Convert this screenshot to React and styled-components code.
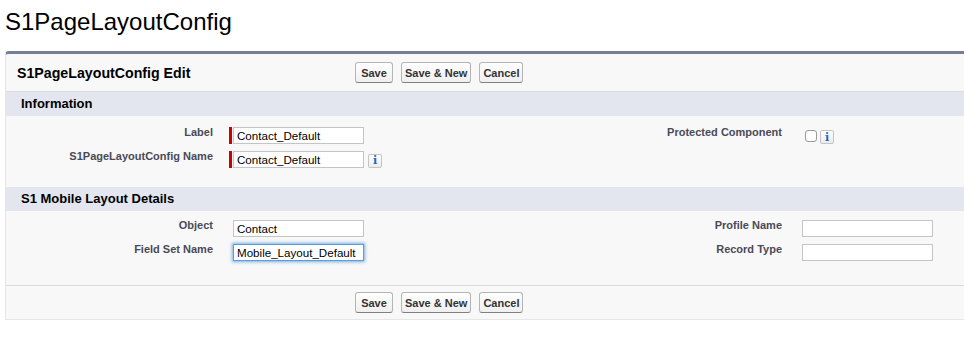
import React from "react";
import styled, { createGlobalStyle } from "styled-components";

const Global = createGlobalStyle`
  html, body { margin: 0; padding: 0; background: #fff; overflow: hidden; }
  body { font-family: Arial, "Liberation Sans", Helvetica, sans-serif; color: #000; }
`;

const Page = styled.div`
  padding-left: 5px;
  width: 1000px;
`;

const PageTitle = styled.h1`
  margin: 8px 0 15px 0;
  font-size: 24px;
  line-height: 28px;
  font-weight: normal;
  color: #000;
`;

const Panel = styled.div`
  width: 990px;
  background: #f8f8f8;
  border-top: 3px solid #747e96;
  border-left: 1px solid #e6e6e6;
  border-bottom: 1px solid #e6e6e6;
  border-top-left-radius: 4px;
`;

const Bar = styled.div`
  display: flex;
  align-items: center;
  height: ${(p) => p.$h}px;
  ${(p) => (p.$top ? "border-bottom: 1px solid #dbdbdb;" : "border-top: 1px solid #dbdbdb;")}
`;

const BarTitle = styled.h2`
  margin: 0;
  width: 349px;
  box-sizing: border-box;
  padding-left: 11px;
  font-size: 14.2px;
  font-weight: bold;
  color: #000;
`;

const Buttons = styled.div`
  display: flex;
  gap: 8px;
`;

const Button = styled.button`
  height: 21px;
  min-width: ${(p) => p.$min || 0}px;
  padding: 0 3px;
  font-family: Arial, "Liberation Sans", Helvetica, sans-serif;
  font-size: 11px;
  font-weight: bold;
  color: #333;
  background: linear-gradient(#ffffff, #efefef);
  border: 1px solid #b5b5b5;
  border-bottom-color: #7f7f7f;
  border-radius: 3px;
  cursor: pointer;
`;

const SectionHeader = styled.h3`
  margin: 0;
  height: 24px;
  line-height: 24px;
  padding-left: 15px;
  background: #e3e6ee;
  font-size: 13px;
  font-weight: bold;
  color: #000;
`;

const SectionBody = styled.div`
  display: grid;
  grid-template-columns: 217px 349px 220px 1fr;
  padding: ${(p) => p.$pt}px 0 ${(p) => p.$pb}px 0;
`;

const LabelCell = styled.div`
  padding: 2px 10px 0 0;
  height: 24px;
  box-sizing: border-box;
  text-align: right;
  font-size: 11px;
  line-height: 13px;
  font-weight: bold;
  color: #4a4a56;
`;

const DataCell = styled.div`
  display: flex;
  align-items: ${(p) => (p.$start ? "flex-start" : "center")};
  height: 24px;
  box-sizing: border-box;
  padding: ${(p) => (p.$start ? "6px" : "3px")} 0 4px 6px;
`;

const RequiredBar = styled.span`
  display: inline-block;
  width: 3px;
  height: 17px;
  margin-right: 1px;
  background: ${(p) => (p.$on ? "#c00" : "transparent")};
`;

const TextInput = styled.input`
  box-sizing: border-box;
  width: 131px;
  height: 17px;
  margin: 0;
  padding: 0 3px;
  font-family: Arial, "Liberation Sans", Helvetica, sans-serif;
  font-size: 11.6px;
  color: #000;
  background: #fff;
  border: 1px solid ${(p) => (p.$focus ? "#5b9dd9" : "#c4c4c4")};
  box-shadow: ${(p) => (p.$focus ? "0 0 3px 1px rgba(91,157,217,0.8)" : "none")};
  outline: none;
`;

const InfoIcon = styled.span`
  display: inline-flex;
  align-items: center;
  justify-content: center;
  box-sizing: border-box;
  width: 14px;
  height: 14px;
  margin-left: ${(p) => p.$ml}px;
  margin-top: ${(p) => p.$mt || 0}px;
  border: 1px solid #c4c4c4;
  border-radius: 2px;
  background: linear-gradient(#ffffff, #ececec);
  font-family: "DejaVu Serif", "Liberation Serif", serif;
  font-weight: bold;
  font-size: 11px;
  line-height: 1;
  color: #1a66c9;
`;

const CheckBox = styled.span`
  display: inline-block;
  box-sizing: border-box;
  width: 12px;
  height: 12px;
  margin-left: 7px;
  border: 1px solid #9a9a9a;
  border-radius: 3px;
  background: #fff;
`;

const Field = ({ required, value, focus }) => (
  <>
    <RequiredBar $on={required} />
    <TextInput readOnly value={value} $focus={focus} />
  </>
);

const ButtonGroup = () => (
  <Buttons>
    <Button $min={38}>Save</Button>
    <Button>Save &amp; New</Button>
    <Button>Cancel</Button>
  </Buttons>
);

export default function App() {
  return (
    <Page>
      <Global />
      <PageTitle>S1PageLayoutConfig</PageTitle>
      <Panel>
        <Bar $top $h={37}>
          <BarTitle>S1PageLayoutConfig Edit</BarTitle>
          <ButtonGroup />
        </Bar>

        <SectionHeader>Information</SectionHeader>
        <SectionBody $pt={8} $pb={15}>
          <LabelCell>Label</LabelCell>
          <DataCell>
            <Field required value="Contact_Default" />
          </DataCell>
          <LabelCell>Protected Component</LabelCell>
          <DataCell $start>
            <CheckBox />
            <InfoIcon $ml={3} $mt={0}>i</InfoIcon>
          </DataCell>

          <LabelCell>S1PageLayoutConfig Name</LabelCell>
          <DataCell>
            <Field required value="Contact_Default" />
            <InfoIcon $ml={4} $mt={2}>i</InfoIcon>
          </DataCell>
          <LabelCell />
          <DataCell />
        </SectionBody>

        <SectionHeader>S1 Mobile Layout Details</SectionHeader>
        <SectionBody $pt={6} $pb={20}>
          <LabelCell>Object</LabelCell>
          <DataCell>
            <Field value="Contact" />
          </DataCell>
          <LabelCell>Profile Name</LabelCell>
          <DataCell>
            <Field value="" />
          </DataCell>

          <LabelCell>Field Set Name</LabelCell>
          <DataCell>
            <Field value="Mobile_Layout_Default" focus />
          </DataCell>
          <LabelCell>Record Type</LabelCell>
          <DataCell>
            <Field value="" />
          </DataCell>
        </SectionBody>

        <Bar $h={33}>
          <BarTitle />
          <ButtonGroup />
        </Bar>
      </Panel>
    </Page>
  );
}
